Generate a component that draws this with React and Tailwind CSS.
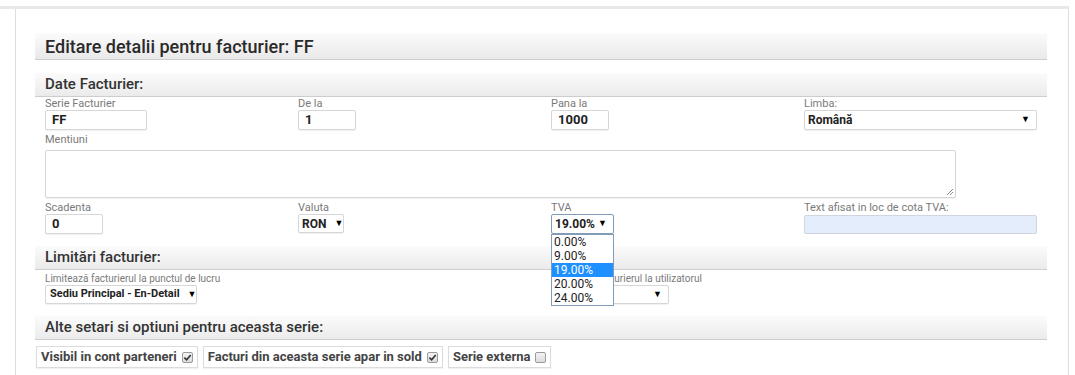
import React from "react";

const font = { fontFamily: "Roboto, 'Open Sans', Arial, sans-serif" };

function Bar({ children, className = "" }) {
  return (
    <div
      className={
        "h-[24px] flex items-center pl-[10px] bg-gradient-to-b from-[#fbfbfb] to-[#ebebeb] border-b border-[#cdcdcd] text-[15px] font-medium text-[#333] " +
        className
      }
    >
      {children}
    </div>
  );
}

function Label({ children, className = "" }) {
  return <div className={"text-[11px] leading-[12px] text-[#7a7a7a] whitespace-nowrap " + className}>{children}</div>;
}

function Input({ value, className = "" }) {
  return (
    <div
      className={
        "h-[20px] border border-[#d6d6d6] rounded-[2px] shadow-[0_1px_1px_rgba(0,0,0,0.06)] pl-[6px] flex items-center text-[13px] font-bold text-[#222] bg-white " +
        className
      }
    >
      {value}
    </div>
  );
}

function Select({ value, className = "" }) {
  return (
    <div
      className={
        "h-[19px] border border-[#d6d6d6] rounded-[2px] shadow-[0_1px_1px_rgba(0,0,0,0.06)] pl-[3px] pr-[6px] flex items-center justify-between font-bold text-[#222] bg-white whitespace-nowrap " +
        className
      }
    >
      <span>{value}</span>
      <span className="text-[9px] ml-[8px] text-black">▼</span>
    </div>
  );
}

function Check({ checked }) {
  return (
    <span className="inline-flex w-[11px] h-[11px] border border-[#9a9a9a] rounded-[2px] bg-gradient-to-b from-[#f4f4f4] to-[#dcdcdc] items-center justify-center ml-[5px]">
      {checked && (
        <svg width="9" height="9" viewBox="0 0 10 10">
          <path d="M1.5 5.2 L4 7.6 L8.6 2.2" stroke="#333" strokeWidth="1.8" fill="none" />
        </svg>
      )}
    </span>
  );
}

function Box({ children, checked, className = "" }) {
  return (
    <div
      className={
        "h-[22px] border border-[#dcdcdc] shadow-[0_1px_1px_rgba(0,0,0,0.05)] flex items-center px-[4px] text-[13px] font-bold text-[#444] whitespace-nowrap " +
        className
      }
    >
      {children}
      <Check checked={checked} />
    </div>
  );
}

export default function App() {
  return (
    <div style={font} className="w-[1075px] h-[375px] bg-white overflow-hidden relative">
      <div className="pt-[6px]">
        <div className="w-[1069px] border-t-[3px] border-[#e8e8e8]" />
        <div className="ml-[15px] w-[1054px] h-[370px] border-l border-r border-[#dedede] pl-[19px] pr-[21px] pt-[24px]">
          <div className="h-[27px] flex items-center pl-[10px] bg-gradient-to-b from-[#fbfbfb] to-[#e9e9e9] border-b border-[#cdcdcd] text-[18px] font-medium text-[#2a2a2a]">
            Editare detalii pentru facturier: FF
          </div>

          <Bar className="mt-[13px]">Date Facturier:</Bar>

          <div className="grid grid-cols-4 mt-[1px]">
            <div className="pl-[10px] pr-[10px]">
              <Label>Serie Facturier</Label>
              <Input value="FF" className="w-[102px]" />
            </div>
            <div className="pl-[10px] pr-[10px]">
              <Label>De la</Label>
              <Input value="1" className="w-[58px]" />
            </div>
            <div className="pl-[10px] pr-[10px]">
              <Label>Pana la</Label>
              <Input value="1000" className="w-[58px]" />
            </div>
            <div className="pl-[10px] pr-[10px]">
              <Label>Limba:</Label>
              <Select value="Română" className="w-full h-[20px] text-[12px]" />
            </div>
          </div>

          <div className="pl-[10px] mt-[4px]">
            <Label>Mentiuni</Label>
            <div className="w-[911px] h-[48px] mt-[4px] border border-[#d6d6d6] rounded-[2px] shadow-[0_1px_1px_rgba(0,0,0,0.06)] relative">
              <svg className="absolute right-[1px] bottom-[1px]" width="9" height="9" viewBox="0 0 9 9">
                <path d="M8 2 L2 8 M8 5 L5 8" stroke="#888" strokeWidth="1" />
              </svg>
            </div>
          </div>

          <div className="grid grid-cols-4 mt-[4px]">
            <div className="pl-[10px] pr-[10px]">
              <Label>Scadenta</Label>
              <Input value="0" className="w-[58px]" />
            </div>
            <div className="pl-[10px] pr-[10px]">
              <Label>Valuta</Label>
              <Select value="RON" className="w-[46px] text-[12px]" />
            </div>
            <div className="pl-[10px] pr-[10px] relative">
              <Label>TVA</Label>
              <div className="w-[63px] h-[20px] border border-[#7f9db9] rounded-[2px] pl-[3px] pr-[6px] flex items-center justify-between text-[12px] font-bold text-[#222] bg-white">
                <span>19.00%</span>
                <span className="text-[9px] text-black">▼</span>
              </div>
              <div className="absolute left-[10px] top-[32px] w-[63px] border border-[#7f9db9] bg-white z-10 text-[12px] leading-[14px] text-[#222]">
                <div className="pl-[2px]">0.00%</div>
                <div className="pl-[2px]">9.00%</div>
                <div className="pl-[2px] bg-[#1e90ff] text-white">19.00%</div>
                <div className="pl-[2px]">20.00%</div>
                <div className="pl-[2px]">24.00%</div>
              </div>
            </div>
            <div className="pl-[10px] pr-[10px]">
              <Label>Text afisat in loc de cota TVA:</Label>
              <div className="h-[19px] mt-[1px] border border-[#cfd6e0] rounded-[2px] bg-[#e3edfb]" />
            </div>
          </div>

          <Bar className="mt-[12px]">Limitări facturier:</Bar>

          <div className="grid grid-cols-4 mt-[3px]">
            <div className="col-span-2 pl-[10px]">
              <div className="text-[10px] leading-[12px] text-[#7a7a7a] whitespace-nowrap">Limitează facturierul la punctul de lucru</div>
              <Select value="Sediu Principal - En-Detail" className="w-[152px] h-[19px] text-[11px] pl-[4px]" />
            </div>
            <div className="col-span-2 pl-[10px]">
              <div className="text-[10px] leading-[12px] text-[#7a7a7a] whitespace-nowrap">Limitează facturierul la utilizatorul</div>
              <Select value="" className="w-[118px] h-[19px] text-[11px]" />
            </div>
          </div>

          <Bar className="mt-[12px]">Alte setari si optiuni pentru aceasta serie:</Bar>

          <div className="flex gap-[5px] mt-[6px] pl-[1px]">
            <Box checked>Visibil in cont parteneri</Box>
            <Box checked>Facturi din aceasta serie apar in sold</Box>
            <Box checked={false}>Serie externa</Box>
          </div>
        </div>
      </div>
    </div>
  );
}
